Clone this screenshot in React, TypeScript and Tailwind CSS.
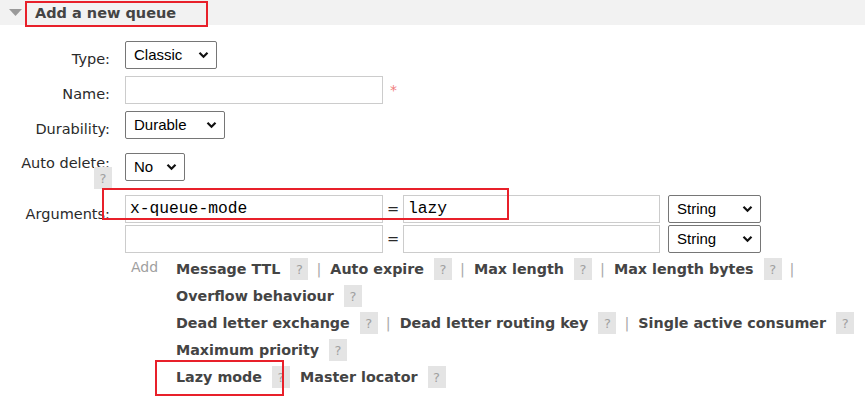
import React from 'react';

const Chevron = () => (
  <svg width="11" height="8" viewBox="0 0 11 8" className="ml-auto">
    <path d="M1.5 1.8 L5.5 5.8 L9.5 1.8" fill="none" stroke="#111" strokeWidth="2.2" />
  </svg>
);

const Select = ({ value, width }: { value: string; width: string }) => (
  <div
    className={`flex h-[28px] items-center rounded-[2px] border border-[#767676] bg-white pl-[8px] pr-[7px] text-[15px] leading-[20px] text-black ${width}`}
    style={{ fontFamily: '"Liberation Sans", Arial, sans-serif' }}
  >
    <span>{value}</span>
    <Chevron />
  </div>
);

const TextBox = ({ value, width }: { value?: string; width: string }) => (
  <div
    className={`flex h-[28px] items-center border border-[#cccccc] bg-white px-[4px] text-[16.3px] leading-[20px] text-black ${width}`}
    style={{ fontFamily: '"Liberation Mono", "Courier New", monospace' }}
  >
    {value}
  </div>
);

const Help = () => (
  <span className="inline-flex h-[22px] w-[18px] items-center justify-center bg-[#e4e4e4] text-[13px] font-normal leading-none text-[#a0a0a0]">
    ?
  </span>
);

const Link = ({ label, sep }: { label: string; sep?: boolean }) => (
  <span className="inline-flex shrink-0 items-center whitespace-nowrap">
    <span className="text-[14.3px] font-bold text-[#444]">{label}</span>
    <span className="ml-[10px]">
      <Help />
    </span>
    {sep && <span className="ml-[8px] mr-[9px] font-normal text-[#aaa]">|</span>}
  </span>
);

export default function App() {
  return (
    <div
      className="relative h-[401px] w-[865px] overflow-hidden bg-white text-[14.5px] leading-[20px] text-[#2a2a2a]"
      style={{ fontFamily: '"DejaVu Sans", Verdana, sans-serif' }}
    >
      <div className="flex h-[25px] items-center bg-[#f2f2f2]">
        <svg width="13" height="8" viewBox="0 0 13 8" className="ml-[9px] mr-[13px]">
          <path d="M0 0 L13 0 L6.5 7 Z" fill="#9a9a9a" />
        </svg>
        <span className="font-bold text-[#444]">Add a new queue</span>
      </div>

      <div className="mt-[16px] flex flex-col">
        {/* Type */}
        <div className="flex h-[28px]">
          <div className="w-[110px] pt-[8px] text-right">Type:</div>
          <div className="ml-[15px]">
            <Select value="Classic" width="w-[92px]" />
          </div>
        </div>

        {/* Name */}
        <div className="mt-[7px] flex h-[28px]">
          <div className="w-[110px] pt-[8px] text-right">Name:</div>
          <div className="ml-[15px]">
            <TextBox width="w-[258px]" />
          </div>
          <span className="ml-[7px] pt-[4px] text-[14px] text-[#f07c7c]">*</span>
        </div>

        {/* Durability */}
        <div className="mt-[7px] flex h-[28px]">
          <div className="w-[110px] pt-[8px] text-right">Durability:</div>
          <div className="ml-[15px]">
            <Select value="Durable" width="w-[100px]" />
          </div>
        </div>

        {/* Auto delete */}
        <div className="mt-[14px] flex h-[28px]">
          <div className="relative w-[110px] text-right">
            <div className="whitespace-nowrap">Auto delete:</div>
            <span className="absolute left-[94px] top-[14px]">
              <Help />
            </span>
          </div>
          <div className="ml-[15px]">
            <Select value="No" width="w-[60px]" />
          </div>
        </div>

        {/* Arguments */}
        <div className="mt-[14px] flex">
          <div className="w-[110px] pt-[9px] text-right">Arguments:</div>
          <div className="ml-[15px] flex flex-col gap-[2px]">
            <div className="flex items-center">
              <TextBox value="x-queue-mode" width="w-[258px]" />
              <span className="w-[20px] text-center">=</span>
              <TextBox value="lazy" width="w-[257px]" />
              <div className="ml-[8px]">
                <Select value="String" width="w-[93px]" />
              </div>
            </div>
            <div className="flex items-center">
              <TextBox width="w-[258px]" />
              <span className="w-[20px] text-center">=</span>
              <TextBox width="w-[257px]" />
              <div className="ml-[8px]">
                <Select value="String" width="w-[93px]" />
              </div>
            </div>
          </div>
        </div>

        {/* Add links */}
        <div className="mt-[4px] flex">
          <div className="ml-[131px] w-[45px] shrink-0 text-[14px] text-[#a0a0a0]">Add</div>
          <div className="flex w-[700px] shrink-0 flex-col gap-[5px] pt-[1px]">
            <div className="flex h-[22px] items-center">
              <Link label="Message TTL" sep />
              <Link label="Auto expire" sep />
              <Link label="Max length" sep />
              <Link label="Max length bytes" sep />
            </div>
            <div className="flex h-[22px] items-center">
              <Link label="Overflow behaviour" />
            </div>
            <div className="flex h-[22px] items-center">
              <Link label="Dead letter exchange" sep />
              <Link label="Dead letter routing key" sep />
              <Link label="Single active consumer" />
            </div>
            <div className="flex h-[22px] items-center">
              <Link label="Maximum priority" />
            </div>
            <div className="flex h-[22px] items-center">
              <span className="inline-flex items-center whitespace-nowrap">
                <span className="text-[14.3px] font-bold text-[#444]">Lazy mode</span>
                <span className="ml-[10px]">
                  <Help />
                </span>
              </span>
              <span className="ml-[10px]">
                <Link label="Master locator" />
              </span>
            </div>
          </div>
        </div>
      </div>

      {/* red annotation boxes */}
      <div className="pointer-events-none absolute left-[25px] top-[1px] h-[26px] w-[183px] border-2 border-[#e8202a]" />
      <div className="pointer-events-none absolute left-[102px] top-[188px] h-[32px] w-[407px] border-2 border-[#e8202a]" />
      <div className="pointer-events-none absolute left-[155px] top-[360px] h-[36px] w-[129px] border-2 border-[#e8202a]" />
    </div>
  );
}
